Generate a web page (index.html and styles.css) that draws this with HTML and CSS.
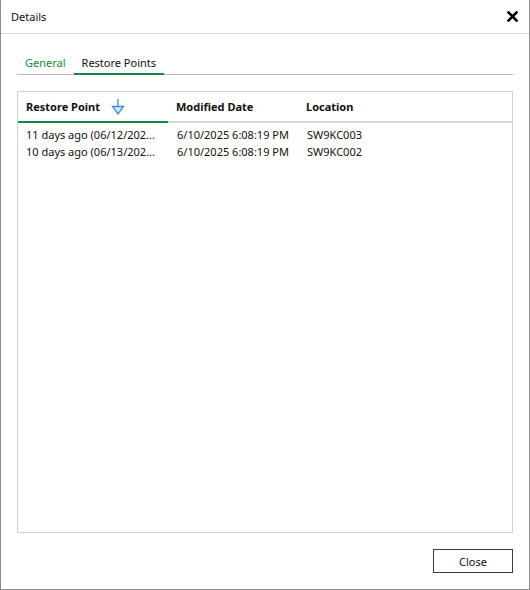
FILE: index.html
```html
<!DOCTYPE html>
<html>
<head>
<meta charset="utf-8">
<link rel="stylesheet" href="styles.css">
</head>
<body>
<div class="window">
  <div class="titlebar">
    <span class="title">Details</span>
    <svg class="close-x" width="11" height="11" viewBox="0 0 11 11"><path d="M1.5 1.5 L9.5 9.5 M9.5 1.5 L1.5 9.5" stroke="#000" stroke-width="2.6" stroke-linecap="square"/></svg>
  </div>
  <div class="content">
    <div class="tabs">
      <div class="tab">General</div>
      <div class="tab active">Restore Points</div>
    </div>
    <div class="grid">
      <div class="head">
        <div class="hcell c1 sorted">Restore Point
          <svg class="sort" width="14" height="18" viewBox="0 0 14 18"><path d="M7 1 V8" stroke="#3a8ad8" stroke-width="1.3"/><path d="M1.5 8.5 H12.5 L7 16 Z" fill="#d4e8fb" stroke="#3a8ad8" stroke-width="1.3" stroke-linejoin="miter"/></svg>
        </div>
        <div class="hcell c2">Modified Date</div>
        <div class="hcell c3">Location</div>
      </div>
      <div class="rows">
        <div class="row"><div class="cell c1">11 days ago (06/12/202...</div><div class="cell c2">6/10/2025 6:08:19 PM</div><div class="cell c3">SW9KC003</div></div>
        <div class="row"><div class="cell c1">10 days ago (06/13/202...</div><div class="cell c2">6/10/2025 6:08:19 PM</div><div class="cell c3">SW9KC002</div></div>
      </div>
    </div>
    <div class="footer">
      <button class="btn">Close</button>
    </div>
  </div>
</div>
</body>
</html>
```
FILE: styles.css
```css
html, body { margin: 0; padding: 0; background: #fff; }
body { font-family: "Noto Sans", "Liberation Sans", sans-serif; font-size: 11px; color: #111; }
.window {
  width: 530px; height: 590px; box-sizing: border-box;
  border-left: 1px solid #8c8c8c; border-right: 1px solid #8c8c8c; border-bottom: 1px solid #8c8c8c;
  display: flex; flex-direction: column;
}
.titlebar {
  height: 33px; border-bottom: 1px solid #dadada;
  display: flex; align-items: center; justify-content: space-between;
  padding: 0 11px 0 10px; flex: none;
}
.title { font-size: 11px; color: #111; }
.close-x { display: block; }
.content { flex: 1; display: flex; flex-direction: column; padding: 0 16px 16px; min-height: 0; }
.tabs {
  margin-top: 19px; display: flex; border-bottom: 1px solid #b8b8b8; flex: none;
}
.tab {
  line-height: 20px; padding: 0 8px; border-bottom: 2px solid transparent; margin-bottom: -1px;
  color: #111;
}
.tab:first-child { color: #138a3c; }
.tab.active { border-bottom-color: #138a3c; }
.grid {
  margin-top: 16px; flex: 1; border: 1px solid #d0d0d0; display: flex; flex-direction: column;
}
.head { display: flex; height: 31px; flex: none; }
.hcell {
  font-weight: bold; display: flex; align-items: center; padding-left: 8px;
  border-bottom: 2px solid #d8d8d8; box-sizing: border-box;
}
.hcell.sorted { border-bottom-color: #138a3c; }
.c1 { width: 150px; box-sizing: border-box; }
.c2 { width: 130px; box-sizing: border-box; }
.c3 { flex: 1; }
.sort { margin-left: 11px; margin-top: 0; }
.rows { padding-top: 3px; }
.row { display: flex; line-height: 17px; }
.cell { padding-left: 8px; white-space: nowrap; }
.row .c1 { overflow: hidden; }
.row .c2 { padding-left: 9px; }
.row .c3 { padding-left: 9px; }
.footer { display: flex; justify-content: flex-end; margin-top: 16px; flex: none; }
.btn {
  width: 80px; height: 24px; border: 1px solid #3c3c3c; background: #fff;
  font-family: inherit; font-size: 11px; color: #111; padding: 0; margin: 0;
}
```
